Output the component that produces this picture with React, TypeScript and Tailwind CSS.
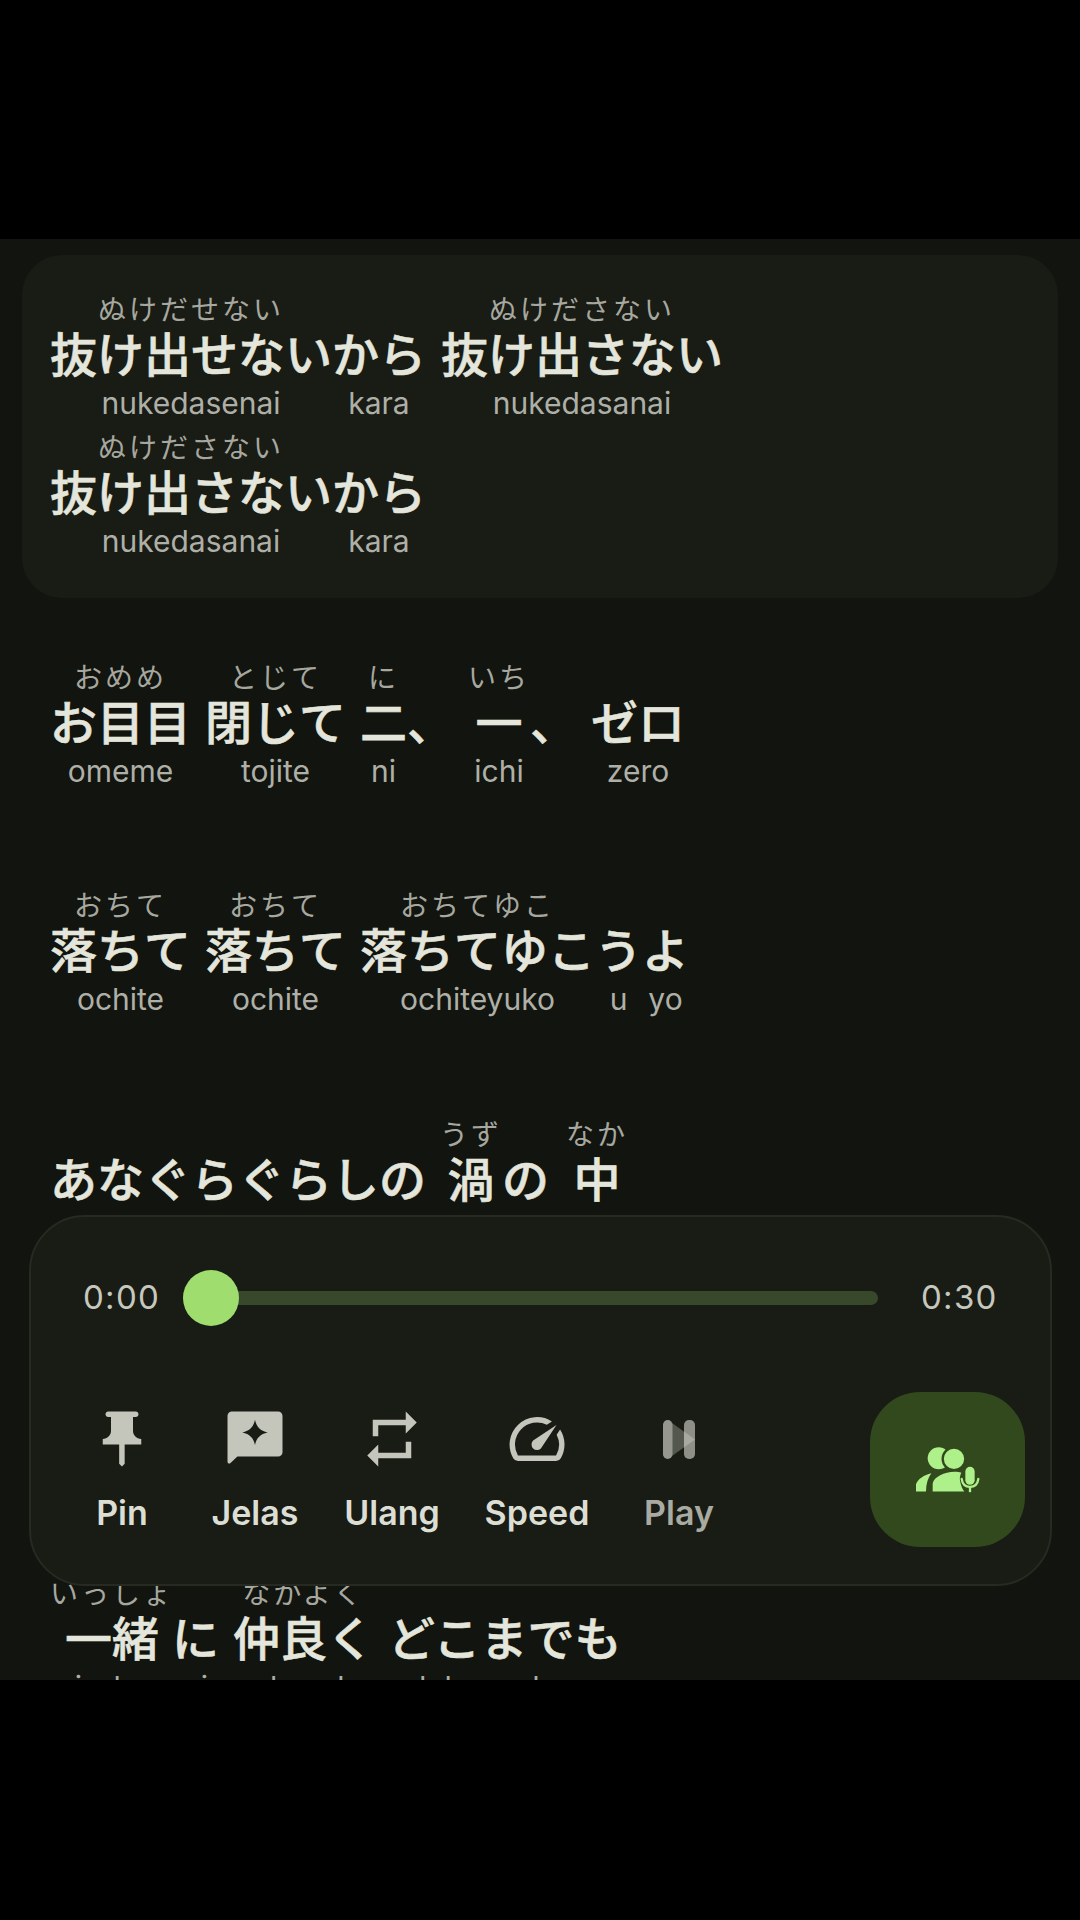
const jp = 'font-["Noto_Sans_CJK_JP",sans-serif]';

type WordProps = {
  text: string;
  ruby?: string;
  romaji?: string;
  className?: string;
};

// one word: furigana on top, kanji in the middle, romaji below
function Word({ text, ruby, romaji, className }: WordProps) {
  return (
    <div className={`flex flex-col items-center ${className ?? ''}`}>
      <div className={`h-[35px] whitespace-nowrap text-[28px] leading-[35px] tracking-[3px] text-[#a6a89f] ${jp}`}>{ruby}</div>
      <div className={`h-[52px] whitespace-nowrap text-[47px] leading-[52px] font-medium [-webkit-text-stroke:0.6px_#e4e6dc] text-[#e4e6dc] ${jp}`}>{text}</div>
      <div className="h-[51px] whitespace-nowrap font-['Inter',sans-serif] text-[30px] leading-[50px] text-[#aeb0a7]">{romaji}</div>
    </div>
  );
}

function PinIcon() {
  return (
    <svg viewBox="0 0 24 24" className="h-[66px] w-[66px] fill-[#c4c6bc]">
      <path d="M16 9V4h1c.55 0 1-.45 1-1s-.45-1-1-1H7c-.55 0-1 .45-1 1s.45 1 1 1h1v5c0 1.66-1.34 3-3 3v2h5.97v7l1 1 1-1v-7H19v-2c-1.66 0-3-1.34-3-3z" />
    </svg>
  );
}

function ChatSparkIcon() {
  return (
    <svg viewBox="0 0 24 24" className="h-[66px] w-[66px] fill-[#c4c6bc]">
      <path
        fillRule="evenodd"
        d="M3.6 2h16.8A1.6 1.6 0 0 1 22 3.6v13.2a1.6 1.6 0 0 1-1.6 1.6H5.6l-2.6 2.400c-.4.3-1 .1-1-.5V3.600A1.600 1.600 0 0 1 3.600 2zM12 5c.5 2.600 2 4.100 4.600 4.600-2.600.5-4.100 2-4.600 4.600-.5-2.600-2-4.100-4.600-4.600 2.600-.5 4.100-2 4.600-4.600z"
      />
    </svg>
  );
}

function RepeatIcon() {
  return (
    <svg viewBox="0 0 24 24" className="h-[66px] w-[66px] fill-[#c4c6bc]">
      <path d="M7 7h10v3l4-4-4-4v3H5v6h2V7zm10 10H7v-3l-4 4 4 4v-3h12v-6h-2v4z" />
    </svg>
  );
}

function SpeedIcon() {
  return (
    <svg viewBox="0 0 24 24" className="h-[66px] w-[66px] fill-[#c4c6bc]">
      <path d="M20.38 8.57l-1.23 1.85a8 8 0 0 1-.22 7.58H5.07A8 8 0 0 1 15.58 6.85l1.85-1.23A10 10 0 0 0 3.35 19a2 2 0 0 0 1.72 1h13.85a2 2 0 0 0 1.74-1 10 10 0 0 0-.27-10.44zm-9.79 6.84a2 2 0 0 0 2.83 0l5.66-8.49-8.49 5.66a2 2 0 0 0 0 2.83z" />
    </svg>
  );
}

function PlayPauseIcon() {
  return (
    <svg viewBox="0 0 66 66" className="h-[66px] w-[66px]">
      <path d="M26 17 L49 33.500 L26 50Z" fill="#54574e" />
      <rect x="17" y="14" width="9.500" height="39" rx="4.700" fill="#969890" />
      <rect x="38" y="14" width="11" height="39" rx="5" fill="#8e9088" />
      <path d="M38 25.600 L49 33.500 L38 41.400Z" fill="#a8aaa1" />
    </svg>
  );
}

function SingAlongIcon() {
  return (
    <svg viewBox="170 200 192 140" className="h-[47px] w-[64px]">
      <circle cx="238" cy="236" r="33" fill="#aef089" />
      <path d="M170 336v-22c6-16 24-28 46-33-10 14-16 32-16 55z" fill="#aef089" />
      <circle cx="284" cy="238" r="34" fill="#aef089" stroke="#31491c" strokeWidth="7" />
      <path d="M220 336v-24c4-20 34-34 66-35 8 0 14 1 20 3-4 8-6 18-3 28 2 10 6 20 12 28z" fill="#aef089" />
      <rect x="318" y="262" width="28" height="54" rx="14" fill="#aef089" />
      <path d="M307 298c2 16 12 24 25 24s23-8 25-24" fill="none" stroke="#aef089" strokeWidth="7" strokeLinecap="round" />
      <path d="M332 322v16" stroke="#aef089" strokeWidth="7" />
    </svg>
  );
}

const actions = [
  { label: 'Pin', icon: <PinIcon />, width: 'w-[108px]', dim: false },
  { label: 'Jelas', icon: <ChatSparkIcon />, width: 'w-[158px]', dim: false },
  { label: 'Ulang', icon: <RepeatIcon />, width: 'w-[116px]', dim: false },
  { label: 'Speed', icon: <SpeedIcon />, width: 'w-[174px]', dim: false },
  { label: 'Play', icon: <PlayPauseIcon />, width: 'w-[110px]', dim: true },
];

export default function App() {
  return (
    <div className="flex h-[1920px] w-[1080px] flex-col bg-black">
      <div className="h-[239px] shrink-0" />

      <main className="relative h-[1441px] shrink-0 overflow-hidden bg-[#12140f] px-[22px] pt-[16px]">
        {/* active line */}
        <section className="rounded-[40px] bg-[#191b15] pt-[36px] pb-[31px] pl-[28px]">
          <div className="flex gap-[15px]">
            <div className="flex">
              <Word text="抜け出せない" ruby="ぬけだせない" romaji="nukedasenai" />
              <Word text="から" romaji="kara" />
            </div>
            <Word text="抜け出さない" ruby="ぬけださない" romaji="nukedasanai" />
          </div>
          <div className="flex">
            <Word text="抜け出さない" ruby="ぬけださない" romaji="nukedasanai" />
            <Word text="から" romaji="kara" />
          </div>
        </section>

        <section className="mt-[61px] flex pl-[28px]">
          <Word text="お目目" ruby="おめめ" romaji="omeme" />
          <Word text="閉じて" ruby="とじて" romaji="tojite" className="ml-[14px]" />
          <Word text="二" ruby="に" romaji="ni" className="ml-[14px]" />
          <Word text="、" />
          <Word text="一" ruby="いち" romaji="ichi" className="ml-[14px]" />
          <Word text="、" />
          <Word text="ゼロ" romaji="zero" className="ml-[14px]" />
        </section>

        <section className="mt-[90px] flex pl-[28px]">
          <Word text="落ちて" ruby="おちて" romaji="ochite" />
          <Word text="落ちて" ruby="おちて" romaji="ochite" className="ml-[14px]" />
          <Word text="落ちてゆこ" ruby="おちてゆこ" romaji="ochiteyuko" className="ml-[14px]" />
          <Word text="う" romaji="u" />
          <Word text="よ" romaji="yo" />
        </section>

        <section className="mt-[91px] flex pl-[28px]">
          <Word text="あなぐらぐらしの" />
          <Word text="渦" ruby="うず" className="ml-[14px]" />
          <Word text="の" />
          <Word text="中" ruby="なか" className="ml-[17px]" />
        </section>

        <section className="mt-[321px] flex pl-[28px]">
          <Word text="一緒" ruby="いっしょ" romaji="issho" />
          <Word text="に" romaji="ni" className="-ml-[2px]" />
          <Word text="仲良く" ruby="なかよく" romaji="nakayoku" className="ml-[14px]" />
          <Word text="どこまでも" romaji="dokomademo" className="ml-[14px]" />
        </section>

        {/* player panel floats over the lyrics */}
        <div className="absolute top-[976px] left-[29px] h-[371px] w-[1023px] rounded-[56px] border-2 border-[#262a20] bg-[#191b15] pl-[52px]">
          <div className="mt-[53px] flex h-[56px] items-center font-['Inter',sans-serif] text-[33px] tracking-[1.300px] text-[#c6c8be]">
            <span className="w-[100px]">0:00</span>
            <div className="relative h-[14px] w-[695px] rounded-full bg-[#38482a]">
              <div className="absolute top-[-21px] left-0 h-[56px] w-[56px] rounded-full bg-[#9fdd6f]" />
            </div>
            <span className="ml-[43px]">0:30</span>
          </div>

          <div className="absolute top-[189px] left-[37px] flex">
            {actions.map((a) => (
              <div key={a.label} className={`flex flex-col items-center ${a.width}`}>
                {a.icon}
                <span
                  className={`mt-[21px] font-['Inter',sans-serif] text-[34px] leading-[40px] font-semibold ${a.dim ? 'text-[#a9aba2]' : 'text-[#dcded4]'}`}
                >
                  {a.label}
                </span>
              </div>
            ))}
          </div>

          <div className="absolute top-[175px] left-[839px] flex h-[155px] w-[155px] items-center justify-center rounded-[50px] bg-[#31491c]">
            <SingAlongIcon />
          </div>
        </div>
      </main>

      <div className="flex-1" />
    </div>
  );
}
